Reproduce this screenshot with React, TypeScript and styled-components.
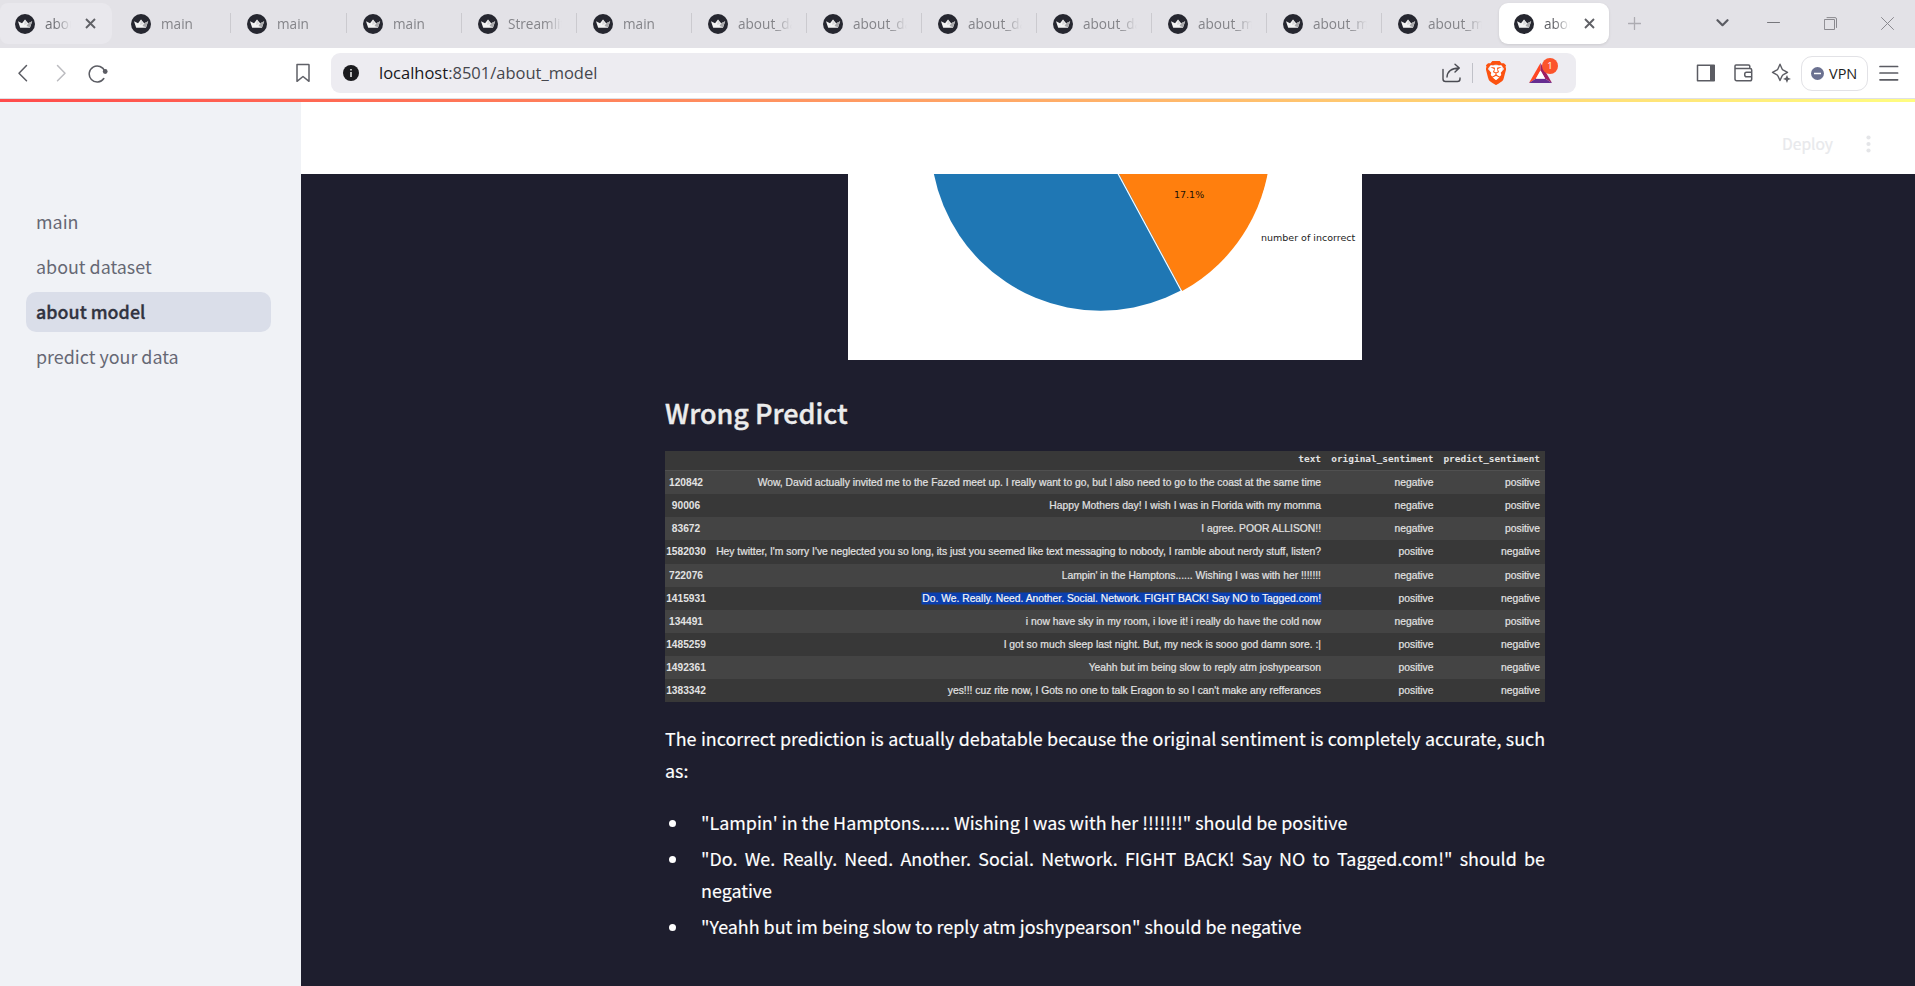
import React from 'react';
import styled, { createGlobalStyle, css } from 'styled-components';
import { SiBrave } from 'react-icons/si';

const SOURCE = '"Noto Sans CJK SC", "Noto Sans", sans-serif';
const SEGOE = '"Open Sans", "Noto Sans", sans-serif';

const GlobalStyle = createGlobalStyle`
  * { box-sizing: border-box; }
  body { margin: 0; background: #fff; overflow: hidden; font-family: ${SOURCE}; }
  svg { display: block; flex: none; }
`;

const Window = styled.div`
  display: flex;
  flex-direction: column;
  width: 1915px;
  height: 986px;
  overflow: hidden;
`;

/* ---------- tab strip ---------- */

const TabStrip = styled.div`
  display: flex;
  flex: none;
  height: 48px;
  padding-top: 3px;
  background: #e3e2e7;
  font: 13.6px ${SEGOE};
`;

const Tab = styled.div<{ $kind: 'plain' | 'hover' | 'active'; $wide?: boolean }>`
  display: flex;
  align-items: center;
  flex: none;
  height: 41px;
  padding-left: 15px;
  ${p => p.$kind === 'plain' && css`width: ${p.$wide ? 116 : 115}px; color: #848489;`}
  ${p => p.$kind === 'hover' && css`
    width: 112px; margin-right: 4px; color: #6f7075;
    background: #e9e8ed; border-radius: 8px 10px 10px 8px;
  `}
  ${p => p.$kind === 'active' && css`
    width: 109.5px; margin-left: 1px; color: #606166;
    background: #fff; border-radius: 9px;
    box-shadow: 0 1px 3px rgba(0, 0, 0, 0.1);
  `}
`;

const TabLabel = styled.span<{ $short?: boolean }>`
  width: ${p => (p.$short ? 26 : 54)}px;
  margin-left: 10px;
  line-height: 20px;
  overflow: hidden;
  white-space: nowrap;
  mask-image: linear-gradient(to right, #000 ${p => (p.$short ? 40 : 68)}%, transparent);
`;

const TabClose = styled.span`
  margin-left: 14px;
`;

const TabDivider = styled.span`
  width: 1px;
  height: 20px;
  margin: 0 1px 1px auto;
  background: #cbcacf;
`;

const NewTab = styled.div`
  display: flex;
  align-items: center;
  height: 40px;
  margin-left: 19px;
`;

const WindowControls = styled.div`
  display: flex;
  align-items: center;
  gap: 44px;
  height: 40px;
  margin-left: auto;
  padding-right: 21px;
`;

const TabMenu = styled.span`
  margin-right: -6px;
`;

/* ---------- toolbar ---------- */

const Toolbar = styled.div`
  display: flex;
  align-items: center;
  flex: none;
  height: 51px;
  padding: 0 16px 0 13px;
  background: #fff;
  border-bottom: 1px solid #dfe0e6;
`;

const NavButtons = styled.div`
  display: flex;
  gap: 17.5px;
  width: 279.5px;
`;

const AddressBar = styled.div`
  display: flex;
  align-items: center;
  width: 1245px;
  height: 40px;
  margin-left: 18.5px;
  padding: 0 24px 0 12px;
  background: #edecf1;
  border-radius: 9px;
`;

const Url = styled.span`
  margin-left: 20px;
  flex: 1;
  font: 16.5px/24px ${SEGOE};
  color: #45464d;
`;

const Host = styled.span`
  color: #17171b;
`;

const AddressDivider = styled.span`
  width: 1px;
  height: 20px;
  margin: 0 13px 0 10px;
  background: #c0c1c8;
`;

const Shield = styled.span`
  display: flex;
  margin-right: 23px;
  color: #fc5210;
`;

const Rewards = styled.span`
  position: relative;
  display: flex;
`;

const Badge = styled.span`
  position: absolute;
  top: -5px;
  left: 13px;
  width: 16px;
  height: 16px;
  border-radius: 50%;
  background: #fc542b;
  color: #fff;
  font: 9.5px/15px ${SEGOE};
  text-align: center;
`;

const ToolButtons = styled.div`
  display: flex;
  align-items: center;
  gap: 17.5px;
  margin-left: auto;
`;

const ToolEnd = styled.div`
  display: flex;
  align-items: center;
  margin-left: -17.5px;
`;

const VpnButton = styled.div`
  display: flex;
  align-items: center;
  gap: 5px;
  width: 67px;
  height: 35px;
  margin: 0 11px 0 10px;
  padding-left: 9px;
  border: 1px solid #e2e2e6;
  border-radius: 11px;
  font: 14.5px ${SEGOE};
  color: #1d1d22;
`;

/* ---------- page ---------- */

const Decoration = styled.div`
  flex: none;
  height: 3px;
  background: linear-gradient(90deg, #ff4b4b, #fffd80);
`;

const Page = styled.div`
  display: flex;
  flex: 1;
  min-height: 0;
`;

const Sidebar = styled.nav`
  display: flex;
  flex-direction: column;
  gap: 5px;
  width: 301px;
  flex: none;
  padding: 100px 30px 0 26px;
  background: #f0f2f6;
`;

const SideLink = styled.a<{ $active?: boolean }>`
  height: 40px;
  padding-left: 10px;
  border-radius: 10px;
  font-size: 17.9px;
  line-height: 39px;
  color: ${p => (p.$active ? '#31333f' : '#666874')};
  ${p => p.$active && css`
    font-weight: 500;
    -webkit-text-stroke: 0.35px #31333f;
    background: #dadee9;
  `}
`;

const Main = styled.main`
  display: flex;
  flex-direction: column;
  flex: 1;
  background: #1e1e2e;
`;

const AppHeader = styled.header`
  display: flex;
  align-items: center;
  justify-content: flex-end;
  gap: 33px;
  flex: none;
  height: 72px;
  padding: 12px 44px 0 0;
  background: #fff;
  font-size: 15.6px;
  line-height: 20px;
  color: #e8e9ec;
`;

const Deploy = styled.span`
  margin-bottom: 2px;
  -webkit-text-stroke: 0.2px #e8e9ec;
`;

const Content = styled.div`
  display: flex;
  flex-direction: column;
  width: 880px;
  margin-left: 364px;
`;

const ChartCard = styled.div`
  align-self: center;
  width: 514px;
  height: 186px;
  background: #fff;
`;

const Heading = styled.h2`
  margin: 33px 0 0;
  height: 58px;
  font-size: 27px;
  font-weight: 500;
  line-height: 40px;
  color: #ececec;
  -webkit-text-stroke: 0.4px #ececec;
`;

const Table = styled.div`
  height: 252px;
  font: 10.32px "Liberation Sans", Arial, sans-serif;
  color: #e2e2e2;
  -webkit-text-stroke: 0.2px #e2e2e2;
`;

const rowGrid = css`
  display: grid;
  grid-template-columns: 42px 614px 112.5px 1fr;
  padding-right: 5px;
  text-align: right;
  white-space: nowrap;
`;

const HeadRow = styled.div`
  ${rowGrid}
  height: 20px;
  background: #383838;
  border-bottom: 1px solid #505050;
  font: bold 9.45px/16px "DejaVu Sans Mono", monospace;
  -webkit-text-stroke: 0;
`;

const Row = styled.div`
  ${rowGrid}
  height: 23.15px;
  line-height: 24px;
  background: #383838;
  &:nth-child(even) { background: #444; }
`;

const Index = styled.span`
  font-weight: bold;
  font-size: 10.2px;
  text-align: center;
  -webkit-text-stroke: 0;
`;

const Selected = styled.span`
  background: #0b3fae;
  color: #fff;
  box-shadow: 0 0 0 0.5px #0b3fae;
`;

const Paragraph = styled.p`
  margin: 19px 0 20px;
  font-size: 17.9px;
  line-height: 32px;
  color: #fff;
  text-align: justify;
  -webkit-text-stroke: 0.15px #fff;
`;

const List = styled.ul`
  display: flex;
  flex-direction: column;
  gap: 4px;
  margin: 0;
  padding: 0;
  list-style: none;
  font-size: 17.9px;
  line-height: 32px;
  color: #fff;
  text-align: justify;
  -webkit-text-stroke: 0.15px #fff;
`;

const Item = styled.li`
  display: grid;
  grid-template-columns: 36px 1fr;
  &::before {
    content: '';
    width: 7px;
    height: 7px;
    margin: 14px 0 0 4px;
    border-radius: 50%;
    background: #fff;
  }
`;

/* ---------- drawings ---------- */

const Crown = () => (
  <svg width="20" height="20" viewBox="0 0 20 20">
    <circle cx="10" cy="10" r="10" fill="#262730" />
    <path d="M3 7.3 7 9.2 10 5.4 13.2 9.2 17.2 7.3 15 13.8H5.2z" fill="#f4f4f4" />
    <path d="M13.2 9.2 17.2 7.3 15 13.2 11.5 12z" fill="#a9a9ac" />
    <path d="M10 5.4 12.2 10 9 11z" fill="#d8d8da" />
  </svg>
);

const Cross = () => (
  <svg width="11" height="11" viewBox="0 0 11 11">
    <path d="M1 1 10 10M10 1 1 10" stroke="#606166" strokeWidth="1.9" />
  </svg>
);

const Stroke = ({ d, color = '#5b5c63', w = 1.5, width = 20, height = 20, children }: {
  d: string; color?: string; w?: number; width?: number; height?: number; children?: React.ReactNode;
}) => (
  <svg width={width} height={height} viewBox={`0 0 ${width} ${height}`} fill="none">
    <path d={d} stroke={color} strokeWidth={w} strokeLinecap="round" strokeLinejoin="round" />
    {children}
  </svg>
);

const Triangle = () => (
  <svg width="23" height="20" viewBox="0 0 23 20">
    <path d="M11.5 0 0 20 7 15.5 11.5 7.5z" fill="#ff4724" />
    <path d="M11.5 0 23 20 16 15.5 11.5 7.5z" fill="#9e1f63" />
    <path d="M0 20H23L16 15.5H7z" fill="#662d91" />
    <path d="M11.5 7.5 16.2 15.7H6.8z" fill="#fff" />
  </svg>
);

const Lion = () => (
  <svg width="20" height="24" viewBox="0 0 20 24">
    <path d="M4 5H16V15L10 20 4 15z" fill="#fff" />
    <SiBrave x={-2} y={0} size={24} />
  </svg>
);

const Pie = () => (
  <svg width="514" height="186" viewBox="848 174 514 186">
    <circle cx="1100.5" cy="140.8" r="169.9" fill="#1f77b4" />
    <path d="M1101.2 140.8H1270.6A169.9 169.9 0 0 1 1182.2 291z" fill="#ff7f0e" />
    <path d="M1100.3 140.8 1182 292" stroke="#fff" strokeWidth="1.2" />
    <g fontFamily="DejaVu Sans, sans-serif" fontSize="9.5">
      <text x="1174" y="197.5" fill="#1c1206">17.1%</text>
      <text x="1261" y="240.5" fill="#1c1c1c">number of incorrect</text>
    </g>
  </svg>
);

/* ---------- data ---------- */

const TABS = ['main', 'main', 'main', 'Streamlit', 'main', 'about_dataset', 'about_dataset',
  'about_dataset', 'about_dataset', 'about_model', 'about_model', 'about_model'];

const LINKS = ['main', 'about dataset', 'about model', 'predict your data'];

const ROWS: [string, string, string, string][] = [
  ['120842', 'Wow, David actually invited me to the Fazed meet up. I really want to go, but I also need to go to the coast at the same time', 'negative', 'positive'],
  ['90006', 'Happy Mothers day! I wish I was in Florida with my momma', 'negative', 'positive'],
  ['83672', 'I agree. POOR ALLISON!!', 'negative', 'positive'],
  ['1582030', "Hey twitter, I'm sorry I've neglected you so long, its just you seemed like text messaging to nobody, I ramble about nerdy stuff, listen?", 'positive', 'negative'],
  ['722076', "Lampin' in the Hamptons...... Wishing I was with her !!!!!!!", 'negative', 'positive'],
  ['1415931', 'Do. We. Really. Need. Another. Social. Network. FIGHT BACK! Say NO to Tagged.com!', 'positive', 'negative'],
  ['134491', 'i now have sky in my room, i love it! i really do have the cold now', 'negative', 'positive'],
  ['1485259', 'I got so much sleep last night. But, my neck is sooo god damn sore. :|', 'positive', 'negative'],
  ['1492361', 'Yeahh but im being slow to reply atm joshypearson', 'positive', 'negative'],
  ['1383342', "yes!!! cuz rite now, I Gots no one to talk Eragon to so I can't make any refferances", 'positive', 'negative'],
];
const SELECTED = '1415931';

const NOTES = [
  '"Lampin\' in the Hamptons...... Wishing I was with her !!!!!!!" should be positive',
  '"Do. We. Really. Need. Another. Social. Network. FIGHT BACK! Say NO to Tagged.com!" should be negative',
  '"Yeahh but im being slow to reply atm joshypearson" should be negative',
];

export default function App() {
  return (
    <Window>
      <GlobalStyle />
      <TabStrip>
        <Tab $kind="hover"><Crown /><TabLabel $short>about</TabLabel><TabClose><Cross /></TabClose></Tab>
        {TABS.map((t, i) => (
          <Tab key={i} $kind="plain" $wide={i < 2}>
            <Crown /><TabLabel>{t}</TabLabel>{i < TABS.length - 1 && <TabDivider />}
          </Tab>
        ))}
        <Tab $kind="active"><Crown /><TabLabel $short>about</TabLabel><TabClose><Cross /></TabClose></Tab>
        <NewTab><Stroke width={13} height={13} w={1.3} color="#adacb2" d="M6.5 .5V12.5M.5 6.5H12.5" /></NewTab>
        <WindowControls>
          <TabMenu><Stroke width={13} height={8} w={2.2} d="M1.5 1.2 6.5 6.2 11.5 1.2" /></TabMenu>
          <Stroke width={13} height={13} w={1} color="#77777c" d="M.5 5.5H12.5" />
          <Stroke width={13} height={13} w={1} color="#8a898f" d="M.8 2.5H10.5V12.5H.8zM3 .6H11Q12.5 .6 12.5 2V10.5" />
          <Stroke width={13} height={13} w={1} color="#8a898f" d="M.5 .5 12.5 12.5M12.5 .5 .5 12.5" />
        </WindowControls>
      </TabStrip>
      <Toolbar>
        <NavButtons>
          <Stroke d="M13.5 2.5 6 10.2 13.5 17.8" />
          <Stroke d="M6.5 2.5 14 10.2 6.5 17.8" color="#bcbcc0" />
          <Stroke d="M16.8 8.5A8 8 0 1 0 15.8 15.5"><circle cx="17.2" cy="8.5" r="2.4" fill="#5b5c63" /></Stroke>
        </NavButtons>
        <Stroke d="M4 1.5H15.5Q16 1.5 16 2V18.3L10 13.5 4 18.3V2Q4 1.5 4 1.5z" color="#5f6067" />
        <AddressBar>
          <svg width="16" height="16" viewBox="0 0 16 16">
            <circle cx="8" cy="8" r="8" fill="#1b1b1f" />
            <path d="M8 7V12M8 4V5.4" stroke="#fff" strokeWidth="1.4" />
          </svg>
          <Url><Host>localhost</Host>:8501/about_model</Url>
          <Stroke d="M1 6.5V16Q1 18.5 3.5 18.5H15.5Q18 18.5 18 16V15M5 14Q5.5 5.5 17 5M13 1.2 17.3 5 13 9" color="#4a4b52" w={1.4} />
          <AddressDivider />
          <Shield><Lion /></Shield>
          <Rewards><Triangle /><Badge>1</Badge></Rewards>
        </AddressBar>
        <ToolButtons>
          <Stroke d="M1.5 2.2H18.2V17.8H1.5z"><path d="M14 2H19V18H14z" fill="#5b5c63" /></Stroke>
          <Stroke d="M1 5.5V3Q1 2 2 2H14.5Q15.8 2 15.8 3.2V5.2M1 4.8Q1.3 5.4 2.5 5.4H16Q17.7 5.4 17.7 7V16Q17.7 17.8 16 17.8H2.7Q1 17.8 1 16zM17.7 9.2H12.5Q10.7 9.2 10.7 11.4 10.7 13.8 12.5 13.8H17.7" />
          <Stroke w={1.4} d="M9 1.2 11 5.7Q11.4 6.8 12.4 7.2L16.5 9.4 12.4 11.6Q11.4 12 11 13.1L9 17.5 7 13.1Q6.6 12 5.6 11.6L1.5 9.4 5.6 7.2Q6.6 6.8 7 5.7z">
            <path d="M16 12 17.1 14.7 20 16 17.1 17.1 16 20 14.7 17.1 12 16 14.7 14.7z" fill="#5b5c63" />
          </Stroke>
          <ToolEnd>
            <VpnButton>
              <svg width="13" height="13" viewBox="0 0 13 13">
                <circle cx="6.5" cy="6.5" r="6.5" fill="#6b7190" />
                <path d="M3 6.5H10" stroke="#fff" strokeWidth="1.5" />
              </svg>
              VPN
            </VpnButton>
            <Stroke w={1.7} d="M1 3.5H18.6M1 10H18.6M1 16.8H18.6" />
          </ToolEnd>
        </ToolButtons>
      </Toolbar>
      <Decoration />
      <Page>
        <Sidebar>
          {LINKS.map(l => <SideLink key={l} $active={l === 'about model'}>{l}</SideLink>)}
        </Sidebar>
        <Main>
          <AppHeader>
            <Deploy>Deploy</Deploy>
            <svg width="5" height="18" viewBox="0 0 5 18" fill="#e4e5e8">
              <circle cx="2.5" cy="2.5" r="2.1" /><circle cx="2.5" cy="9" r="2.1" /><circle cx="2.5" cy="15.5" r="2.1" />
            </svg>
          </AppHeader>
          <Content>
            <ChartCard><Pie /></ChartCard>
            <Heading>Wrong Predict</Heading>
            <Table>
              <HeadRow><span /><span>text</span><span>original_sentiment</span><span>predict_sentiment</span></HeadRow>
              {ROWS.map(([id, text, original, predicted]) => (
                <Row key={id}>
                  <Index>{id}</Index>
                  <span>{id === SELECTED ? <Selected>{text}</Selected> : text}</span>
                  <span>{original}</span>
                  <span>{predicted}</span>
                </Row>
              ))}
            </Table>
            <Paragraph>
              The incorrect prediction is actually debatable because the original sentiment is completely accurate, such as:
            </Paragraph>
            <List>
              {NOTES.map(n => <Item key={n}><span>{n}</span></Item>)}
            </List>
          </Content>
        </Main>
      </Page>
    </Window>
  );
}
